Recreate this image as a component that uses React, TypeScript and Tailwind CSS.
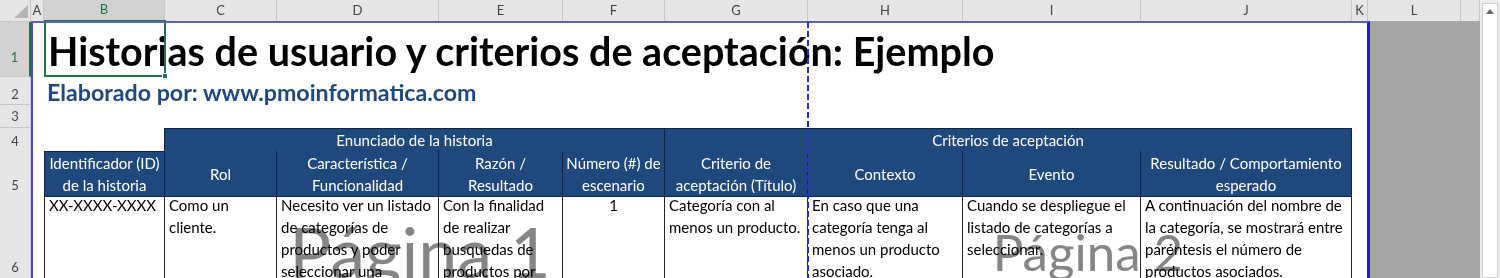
import React from "react";

// Excel page-break preview of a user story sheet
const GRID =
  "grid grid-cols-[31px_13px_121px_112px_162px_124px_102px_143px_155px_178px_211px_16px_93px_19px]";

const columns = ["A", "B", "C", "D", "E", "F", "G", "H", "I", "J", "K", "L", ""];

const headers: string[][] = [
  ["Identificador (ID)", "de la historia"],
  ["Rol"],
  ["Característica /", "Funcionalidad"],
  ["Razón /", "Resultado"],
  ["Número (#) de", "escenario"],
  ["Criterio de", "aceptación (Título)"],
  ["Contexto"],
  ["Evento"],
  ["Resultado / Comportamiento", "esperado"],
];

const row6: { lines: string[]; center?: boolean }[] = [
  { lines: ["XX-XXXX-XXXX"] },
  { lines: ["Como un", "cliente."] },
  { lines: ["Necesito ver un listado", "de categorías de", "productos y poder", "seleccionar una"] },
  { lines: ["Con la finalidad", "de realizar", "busquedas de", "productos por"] },
  { lines: ["1"], center: true },
  { lines: ["Categoría con al", "menos un producto."] },
  { lines: ["En caso que una", "categoría tenga al", "menos un producto", "asociado."] },
  { lines: ["Cuando se despliegue el", "listado de categorías a", "seleccionar."] },
  { lines: ["A continuación del nombre de", "la categoría, se mostrará entre", "paréntesis el número de", "productos asociados."] },
];

function ColumnHeaders() {
  return (
    <div className={`${GRID} h-[21px] bg-[#e6e6e6] text-[13px] text-[#444444]`}>
      <div className="relative border-r border-b border-[#c6c6c6]">
        <svg className="absolute right-[2px] bottom-[3px]" width="14" height="13" viewBox="0 0 14 13">
          <path d="M14 0 L14 13 L0 13 Z" fill="#b4b4b4" />
        </svg>
      </div>
      {columns.map((c, i) =>
        c === "B" ? (
          <div
            key={i}
            className="flex items-center justify-center bg-[#d2d2d2] text-[#217346] border-r border-r-[#c6c6c6] border-b-2 border-b-[#217346]"
          >
            {c}
          </div>
        ) : (
          <div key={i} className="flex items-center justify-center border-r border-b border-[#c6c6c6]">
            {c}
          </div>
        )
      )}
    </div>
  );
}

interface RowProps {
  n: number;
  h: string;
  pb: string;
  selected?: boolean;
  children?: React.ReactNode;
}

function Row({ n, h, pb, selected, children }: RowProps) {
  return (
    <div className={`${GRID} ${h} shrink-0`}>
      <div
        className={`flex items-end justify-center border-b border-b-[#c6c6c6] text-[13px] leading-[16px] ${pb} ${
          selected
            ? "bg-[#d2d2d2] text-[#217346] border-r-2 border-r-[#217346]"
            : "bg-[#e6e6e6] text-[#444444] border-r border-r-[#c6c6c6]"
        }`}
      >
        {n}
      </div>
      {children}
      <div className="bg-[#a5a5a5]" />
      <div className="bg-[#a5a5a5]" />
    </div>
  );
}

export default function App() {
  return (
    <div className="relative flex h-[278px] w-[1500px] overflow-hidden bg-white font-['Lato',sans-serif]">
      <div className="flex w-[1480px] flex-col">
        <ColumnHeaders />

        <Row n={1} h="h-[56px]" pb="pb-[11px]" selected>
          <div />
          <div className="relative col-span-10 flex items-end pb-[7px] pl-[4px]">
            <span className="whitespace-nowrap text-[39.5px] font-bold leading-none text-black">
              Historias de usuario y criterios de aceptación: Ejemplo
            </span>
            <div className="absolute -top-px left-0 h-[57px] w-[122px] border-2 border-[#217346]">
              <div className="absolute -bottom-[4px] -right-[4px] h-[6px] w-[6px] border border-white bg-[#217346]" />
            </div>
          </div>
        </Row>

        <Row n={2} h="h-[28px]" pb="pb-[2px]">
          <div />
          <div className="col-span-10 flex items-end pb-[1px] pl-[3px]">
            <span className="whitespace-nowrap text-[23.2px] font-bold leading-none text-[#1f497d]">
              Elaborado por: www.pmoinformatica.com
            </span>
          </div>
        </Row>

        <Row n={3} h="h-[23px]" pb="pb-[3px]">
          <div className="col-span-11" />
        </Row>

        <Row n={4} h="h-[23px]" pb="pb-[3px]">
          <div />
          <div className="border-r border-[#10243d]" />
          <div className="col-span-4 flex items-center justify-center border-t border-r border-b border-[#10243d] bg-[#1f497d] text-[15px] text-white">
            Enunciado de la historia
          </div>
          <div className="col-span-4 flex items-center justify-center border-t border-r border-b border-[#10243d] bg-[#1f497d] text-[15px] text-white">
            Criterios de aceptación
          </div>
          <div />
        </Row>

        <Row n={5} h="h-[43px]" pb="pb-[3px]">
          <div />
          {headers.map((lines, i) => (
            <div
              key={i}
              className={`flex flex-col items-center justify-center whitespace-nowrap border-r border-b border-[#10243d] bg-[#1f497d] text-center text-[15px] leading-[22px] text-white ${
                i === 0 ? "border-l border-t" : ""
              }`}
            >
              {lines.map((l) => (
                <span key={l}>{l}</span>
              ))}
            </div>
          ))}
          <div />
        </Row>

        <Row n={6} h="h-[90px]" pb="pb-[8px]">
          <div />
          {row6.map((cell, i) => (
            <div
              key={i}
              className={`flex flex-col overflow-hidden whitespace-nowrap border-r border-b border-[#262626] text-[15px] leading-[22px] text-black ${
                cell.center ? "items-center" : "pl-[4px]"
              } ${i === 0 ? "border-l" : ""}`}
            >
              {cell.lines.map((l) => (
                <span key={l}>{l}</span>
              ))}
            </div>
          ))}
          <div />
        </Row>
      </div>

      {/* vertical scrollbar */}
      <div className="flex w-[20px] flex-col bg-[#ececec] px-[2px] pt-[3px]">
        <div className="flex flex-1 flex-col border border-[#d0d0d0] bg-white">
          <div className="flex h-[14px] items-center justify-center">
            <svg width="8" height="5" viewBox="0 0 8 5">
              <path d="M0 5 L4 0 L8 5 Z" fill="#6b6b6b" />
            </svg>
          </div>
        </div>
      </div>

      {/* print area outline */}
      <div className="pointer-events-none absolute bottom-0 left-[31px] top-[21px] w-[1339px] border-t-2 border-l-2 border-r-[3px] border-t-[#6262ac] border-l-[#4b4bc4] border-r-[#1c1cdc]" />

      {/* page break */}
      <div className="pointer-events-none absolute bottom-0 left-[807px] top-[22px] w-[2px] bg-[repeating-linear-gradient(to_bottom,#2a2ad4_0px,#2a2ad4_6px,transparent_6px,transparent_9px)]" />

      {/* page watermarks */}
      <div className="pointer-events-none absolute left-[32px] top-[216px] w-[776px] whitespace-nowrap text-center text-[70px] leading-none text-[#858585] mix-blend-multiply">
        Página 1
      </div>
      <div className="pointer-events-none absolute left-[808px] top-[226px] w-[560px] whitespace-nowrap text-center text-[51px] leading-none text-[#858585] mix-blend-multiply">
        Página 2
      </div>
    </div>
  );
}
